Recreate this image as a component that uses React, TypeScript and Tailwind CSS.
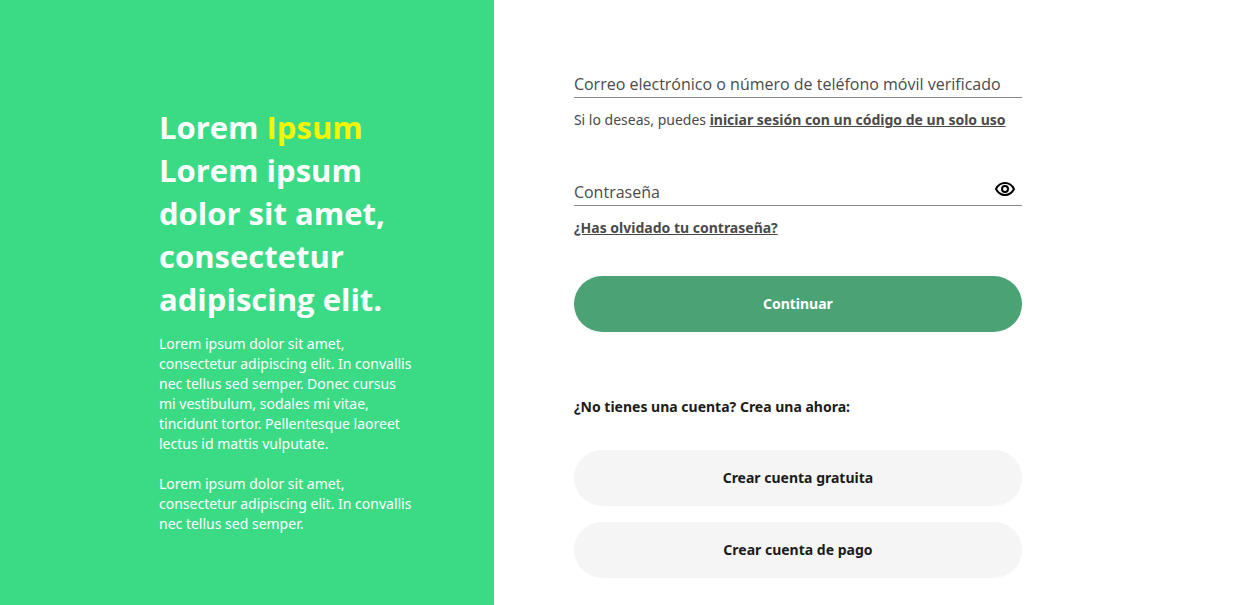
import { useState } from "react";

type FieldProps = {
  id: string;
  label: string;
  type: string;
  autoComplete: string;
  children?: React.ReactNode;
};

function Field({ id, label, type, autoComplete, children }: FieldProps) {
  return (
    <div className="relative flex h-12 items-end border-b border-[#8a8a8a] focus-within:border-[#1b1b1b]">
      <input
        id={id}
        name={id}
        type={type}
        autoComplete={autoComplete}
        placeholder=" "
        className="peer h-7 min-w-0 flex-1 bg-transparent text-base text-[#1b1b1b] outline-none"
      />
      <label
        htmlFor={id}
        className="pointer-events-none absolute bottom-0 left-0 h-[26px] font-['Open_Sans',sans-serif] text-base leading-[26px] font-normal text-[#4a4a4a] peer-focus:bottom-6 peer-focus:text-xs peer-[:not(:placeholder-shown)]:bottom-6 peer-[:not(:placeholder-shown)]:text-xs"
      >
        {label}
      </label>
      {children}
    </div>
  );
}

function EyeIcon() {
  return (
    <svg viewBox="0 0 24 24" className="size-6" fill="none" stroke="currentColor" strokeWidth="2" aria-hidden="true">
      <path d="M3 12C4.9 8.2 8.2 6 12 6s7.1 2.2 9 6c-1.9 3.8-5.2 6-9 6s-7.1-2.2-9-6Z" strokeLinejoin="round" />
      <circle cx="12" cy="12" r="3" />
    </svg>
  );
}

function Intro() {
  return (
    <aside className="w-[39.8%] shrink-0 bg-[#3bdb85] pt-[106px] pr-20 pb-16 pl-[159px] text-white">
      <h1 className="font-['Open_Sans',sans-serif] text-[31px] leading-[43px] font-bold">
        Lorem <span className="text-[#f5f500]">Ipsum</span>
        <br />
        Lorem ipsum dolor sit amet, consectetur adipiscing elit.
      </h1>
      <div className="mt-[13px] flex flex-col gap-5 text-sm leading-5">
        <p>
          Lorem ipsum dolor sit amet, consectetur adipiscing elit. In convallis nec tellus sed semper. Donec cursus mi
          vestibulum, sodales mi vitae, tincidunt tortor. Pellentesque laoreet lectus id mattis vulputate.
        </p>
        <p>Lorem ipsum dolor sit amet, consectetur adipiscing elit. In convallis nec tellus sed semper.</p>
      </div>
    </aside>
  );
}

function LoginForm() {
  const [visible, setVisible] = useState(false);

  return (
    <form className="w-full max-w-[448px]" onSubmit={(event) => event.preventDefault()}>
      <Field
        id="usuario"
        label="Correo electrónico o número de teléfono móvil verificado"
        type="text"
        autoComplete="username"
      />
      <p className="mt-3 text-sm leading-5 text-[#4a4a4a]">
        Si lo deseas, puedes{" "}
        <a href="#codigo" className="font-bold underline">
          iniciar sesión con un código de un solo uso
        </a>
      </p>

      <div className="mt-7">
        <Field id="clave" label="Contraseña" type={visible ? "text" : "password"} autoComplete="current-password">
          <button
            type="button"
            aria-label="Mostrar contraseña"
            aria-pressed={visible}
            onClick={() => setVisible(!visible)}
            className="mr-[5px] mb-1 text-black"
          >
            <EyeIcon />
          </button>
        </Field>
      </div>
      <p className="mt-3 text-sm leading-5 text-[#4a4a4a]">
        <a href="#recuperar" className="font-bold underline">
          ¿Has olvidado tu contraseña?
        </a>
      </p>

      <button type="submit" className="mt-[38px] h-14 w-full rounded-full bg-[#4ba375] text-sm font-bold text-white">
        Continuar
      </button>

      <h2 className="mt-[65px] text-sm leading-5 font-bold text-[#1b1b1b]">¿No tienes una cuenta? Crea una ahora:</h2>
      <div className="mt-[33px] flex flex-col gap-4">
        <button type="button" className="h-14 w-full rounded-full bg-[#f5f5f5] text-sm font-bold text-[#1b1b1b]">
          Crear cuenta gratuita
        </button>
        <button type="button" className="h-14 w-full rounded-full bg-[#f5f5f5] text-sm font-bold text-[#1b1b1b]">
          Crear cuenta de pago
        </button>
      </div>
    </form>
  );
}

export default function App() {
  return (
    <div className="flex min-h-screen bg-white font-['Noto_Sans',sans-serif]">
      <Intro />
      <main className="min-w-0 flex-1 px-20 pt-[50px] pb-[27px]">
        <LoginForm />
      </main>
    </div>
  );
}
